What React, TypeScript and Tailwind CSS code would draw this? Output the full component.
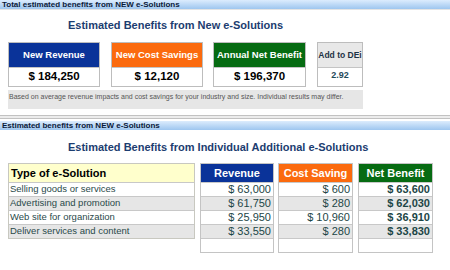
import React from "react";

const F = { fontFamily: '"Liberation Sans", Arial, sans-serif' };

function Bar({ text }: { text: string }) {
  return (
    <div className="h-[9px] w-full bg-gradient-to-b from-[#dcecfd] to-[#9ec6ef] pl-[2px] text-[8px] font-bold leading-[9px] text-[#0b1a3a] whitespace-nowrap overflow-hidden">
      {text}
    </div>
  );
}

function Card({ title, value, color, w }: { title: string; value: string; color: string; w: string }) {
  return (
    <div className={`flex flex-col border border-[#bdbdbd] ${w}`}>
      <div className={`h-[24px] flex items-center justify-center text-white font-bold text-[9.5px] ${color}`}>{title}</div>
      <div className="h-[19px] border-t border-[#c4c4c4] bg-white flex items-center justify-center font-bold text-[11.5px] text-black">{value}</div>
    </div>
  );
}

const types = [
  "Selling goods or services",
  "Advertising and promotion",
  "Web site for organization",
  "Deliver services and content",
];
const rev = ["$ 63,000", "$ 61,750", "$ 25,950", "$ 33,550", ""];
const cost = ["$ 600", "$ 280", "$ 10,960", "$ 280", ""];
const net = ["$ 63,600", "$ 62,030", "$ 36,910", "$ 33,830", ""];

function ValCol({ title, color, vals, bold, w }: { title: string; color: string; vals: string[]; bold?: boolean; w: string }) {
  return (
    <div className={`flex flex-col border border-[#c4c4c4] ${w}`}>
      <div className={`h-[18px] flex items-center justify-center text-white font-bold text-[11px] ${color}`}>{title}</div>
      {vals.map((v, i) => (
        <div
          key={i}
          className={`h-[14px] border-t border-[#c8c8c8] flex items-center justify-end pr-[2px] text-[11px] leading-[13px] text-[#1d4646] ${bold ? "font-bold" : ""} ${i % 2 === 1 ? "bg-[#e6e6e6]" : "bg-white"}`}
        >
          {v}
        </div>
      ))}
    </div>
  );
}

export default function App() {
  return (
    <div className="w-[450px] h-[270px] bg-white overflow-hidden flex flex-col" style={F}>
      <Bar text="Total estimated benefits from NEW e-Solutions" />
      <div className="h-px bg-[#e4e4e4]" />
      <div className="mt-[9px] pl-[68px] h-[13px] text-[11px] leading-[13px] font-bold text-[#1c3d70] whitespace-nowrap">
        Estimated Benefits from New e-Solutions
      </div>
      <div className="mt-[10px] pl-[8px] flex">
        <Card title="New Revenue" value="$ 184,250" color="bg-[#0a3399]" w="w-[92px]" />
        <div className="ml-[11px]">
          <Card title="New Cost Savings" value="$ 12,120" color="bg-[#fb6a0e]" w="w-[92px]" />
        </div>
        <div className="ml-[10px]">
          <Card title="Annual Net Benefit" value="$ 196,370" color="bg-[#066b12]" w="w-[93px]" />
        </div>
        <div className="ml-[11px] w-[46px] flex flex-col border border-[#bdbdbd]">
          <div className="h-[24px] flex items-center justify-center bg-[#e8e8e8] text-[#1e3345] font-bold text-[8.5px] whitespace-nowrap">Add to DEi</div>
          <div className="h-[19px] border-t border-[#c4c4c4] bg-white flex items-start justify-center pt-[1px] font-bold text-[9px] text-[#1f4a5a]">2.92</div>
        </div>
      </div>
      <div className="mt-[3px] ml-[8px] w-[355px] h-[19px] bg-[#e6e6e6] pl-[1px] pt-[3px] text-[7px] leading-[8px] text-[#555] whitespace-nowrap overflow-hidden">
        Based on average revenue impacts and cost savings for your industry and size. Individual results may differ.
      </div>
      <div className="mt-[6px] h-[4px] border-t border-b border-[#c2c2c2] bg-[#ececec]" />
      <div className="mt-[2px]">
        <Bar text="Estimated benefits from NEW e-Solutions" />
      </div>
      <div className="mt-[11px] pl-[68px] h-[13px] text-[11px] leading-[13px] font-bold text-[#1c3d70] whitespace-nowrap">
        Estimated Benefits from Individual Additional e-Solutions
      </div>
      <div className="mt-[9px] pl-[8px] flex items-start">
        <div className="w-[187px] flex flex-col border border-[#c8c8c0]">
          <div className="h-[18px] bg-[#ffffcc] flex items-center pl-[2px] font-bold text-[11px] text-black">Type of e-Solution</div>
          {types.map((t, i) => (
            <div
              key={i}
              className={`h-[14px] border-t border-[#c8c8c8] flex items-center pl-[1px] text-[9.5px] text-[#2a4a4a] ${i % 2 === 1 ? "bg-[#e6e6e6]" : "bg-white"}`}
            >
              {t}
            </div>
          ))}
        </div>
        <div className="ml-[5px]">
          <ValCol title="Revenue" color="bg-[#0a3399]" vals={rev} w="w-[74px]" />
        </div>
        <div className="ml-[4px]">
          <ValCol title="Cost Saving" color="bg-[#fb6a0e]" vals={cost} w="w-[75px]" />
        </div>
        <div className="ml-[5px]">
          <ValCol title="Net Benefit" color="bg-[#066b12]" vals={net} bold w="w-[75px]" />
        </div>
      </div>
    </div>
  );
}
